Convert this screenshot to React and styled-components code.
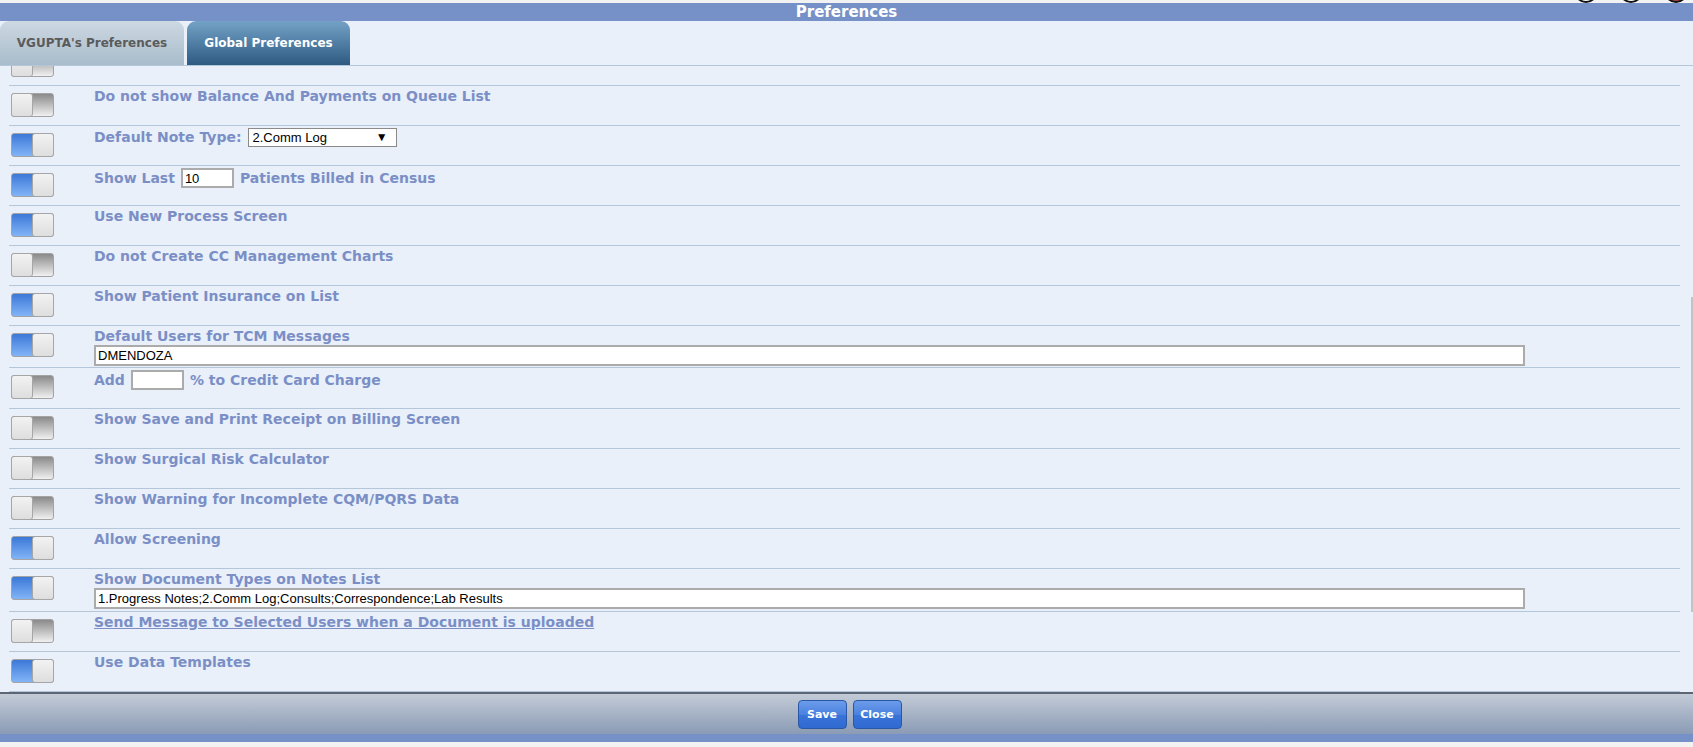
import styled, { createGlobalStyle } from "styled-components";

const GlobalStyle = createGlobalStyle`
  html, body {
    margin: 0;
    padding: 0;
    background: #f2f2f2;
    font-family: "DejaVu Sans", Verdana, sans-serif;
  }
  * { box-sizing: border-box; }
`;

const rows = [
  { id: "above", on: false, clipped: true },
  { id: "balance", on: false, label: "Do not show Balance And Payments on Queue List" },
  { id: "note", on: true, kind: "select", label: "Default Note Type:", value: "2.Comm Log" },
  { id: "census", on: true, kind: "inline", before: "Show Last", value: "10", after: "Patients Billed in Census" },
  { id: "process", on: true, label: "Use New Process Screen" },
  { id: "cc", on: false, label: "Do not Create CC Management Charts" },
  { id: "insurance", on: true, label: "Show Patient Insurance on List" },
  { id: "tcm", on: true, kind: "wide", label: "Default Users for TCM Messages", value: "DMENDOZA" },
  { id: "credit", on: false, kind: "inline", before: "Add", value: "", after: "% to Credit Card Charge", extra: 1 },
  { id: "receipt", on: false, label: "Show Save and Print Receipt on Billing Screen" },
  { id: "risk", on: false, label: "Show Surgical Risk Calculator" },
  { id: "cqm", on: false, label: "Show Warning for Incomplete CQM/PQRS Data" },
  { id: "screening", on: true, label: "Allow Screening" },
  { id: "doctypes", on: true, kind: "wide", label: "Show Document Types on Notes List", value: "1.Progress Notes;2.Comm Log;Consults;Correspondence;Lab Results", extra: 1 },
  { id: "message", on: false, link: true, label: "Send Message to Selected Users when a Document is uploaded" },
  { id: "templates", on: true, label: "Use Data Templates" },
];

export default function App() {
  return (
    <Page>
      <GlobalStyle />
      <TopStrip>
        <WinDot />
        <WinDot />
        <WinDot $red />
      </TopStrip>
      <TitleBar>Preferences</TitleBar>
      <TabBar>
        <Tab>VGUPTA's Preferences</Tab>
        <Tab $active>Global Preferences</Tab>
      </TabBar>
      <Content>
        <List>
          {rows.map((r) => (
            <Row key={r.id} $extra={r.extra || 0}>
              <Toggle $on={r.on}>
                <Knob />
              </Toggle>
              <Body>
                {r.kind === "select" && (
                  <Label>
                    {r.label}
                    <SelectBox>
                      <span>{r.value}</span>
                      <Arrow>▼</Arrow>
                    </SelectBox>
                  </Label>
                )}
                {r.kind === "inline" && (
                  <Label>
                    {r.before}
                    <SmallInput defaultValue={r.value} />
                    {r.after}
                  </Label>
                )}
                {r.kind === "wide" && (
                  <>
                    <Label>{r.label}</Label>
                    <WideInput defaultValue={r.value} />
                  </>
                )}
                {!r.kind && !r.clipped && <Label $link={r.link}>{r.label}</Label>}
              </Body>
            </Row>
          ))}
        </List>
        <ScrollThumb />
      </Content>
      <Footer>
        <Button>Save</Button>
        <Button>Close</Button>
      </Footer>
      <BottomBand />
      <BottomEdge />
    </Page>
  );
}

const Page = styled.div`
  width: 1693px;
  height: 747px;
  display: flex;
  flex-direction: column;
  overflow: hidden;
  background: #e9f0fa;
`;

const TopStrip = styled.div`
  height: 3px;
  background: #f2f2f2;
  display: flex;
  justify-content: flex-end;
  gap: 21px;
  padding-right: 5px;
  overflow: hidden;
`;

const WinDot = styled.div`
  width: 24px;
  height: 24px;
  margin-top: -21px;
  border-radius: 50%;
  border: 2px solid #111;
  background: ${({ $red }) => ($red ? "#b04040" : "#fff")};
`;

const TitleBar = styled.div`
  height: 18px;
  background: #7591c8;
  color: #fff;
  font-weight: bold;
  font-size: 15px;
  line-height: 18px;
  text-align: center;
`;

const TabBar = styled.div`
  height: 45px;
  display: flex;
  align-items: flex-end;
  gap: 3px;
  border-bottom: 1px solid #b4c7da;
  background: #e9f0fa;
`;

const Tab = styled.div`
  height: 44px;
  width: ${({ $active }) => ($active ? "163px" : "184px")};
  border-radius: 9px 9px 0 0;
  display: flex;
  align-items: center;
  justify-content: center;
  font-weight: bold;
  font-size: 12px;
  color: ${({ $active }) => ($active ? "#ffffff" : "#5b5b5b")};
  background: ${({ $active }) =>
    $active
      ? "linear-gradient(to bottom, #74a2c6, #2e5a82)"
      : "linear-gradient(to bottom, #cdd8e2, #a8bccb)"};
`;

const Content = styled.div`
  position: relative;
  height: 626px;
  overflow: hidden;
`;

const List = styled.div`
  margin-top: -20px;
  padding: 0 13px 0 9px;
`;

const Row = styled.div`
  display: flex;
  min-height: ${({ $extra }) => 40 + $extra}px;
  padding-bottom: ${({ $extra }) => $extra}px;
  border-bottom: 1px solid #b4c7da;
`;

const Toggle = styled.div`
  flex: none;
  width: 43px;
  height: 24px;
  margin: 7px 0 0 2px;
  border: 1px solid #a3a3a3;
  border-radius: 3px;
  display: flex;
  justify-content: ${({ $on }) => ($on ? "flex-end" : "flex-start")};
  background: ${({ $on }) =>
    $on
      ? "linear-gradient(to bottom, #3b78d8, #82b4f6)"
      : "linear-gradient(to bottom, #8a8a8a, #f0f0f0)"};
`;

const Knob = styled.div`
  width: 22px;
  height: 24px;
  margin: -1px;
  border: 1px solid #a6a6a6;
  border-radius: 3px;
  background: linear-gradient(to bottom, #f2f2f2, #dedede);
`;

const Body = styled.div`
  flex: 1;
  display: flex;
  flex-direction: column;
  padding: 2px 0 1px 40px;
`;

const Label = styled.div`
  display: flex;
  align-items: center;
  gap: 6px;
  min-height: 17px;
  line-height: 17px;
  font-size: 14px;
  font-weight: bold;
  color: #7b8fc6;
  text-decoration: ${({ $link }) => ($link ? "underline" : "none")};
  cursor: ${({ $link }) => ($link ? "pointer" : "default")};
`;

const SelectBox = styled.div`
  display: flex;
  align-items: center;
  justify-content: space-between;
  width: 149px;
  height: 19px;
  padding: 0 8px 0 4px;
  background: #fff;
  border: 1px solid #8a8a8a;
  font-family: "Liberation Sans", Arial, sans-serif;
  font-weight: normal;
  font-size: 13px;
  color: #000;
`;

const Arrow = styled.span`
  font-size: 12px;
`;

const SmallInput = styled.input`
  width: 53px;
  height: 20px;
  padding: 0 2px;
  border: 2px solid #ababab;
  background: #fff;
  font-family: "Liberation Sans", Arial, sans-serif;
  font-size: 13px;
  color: #000;
  outline: none;
`;

const WideInput = styled.input`
  width: 1431px;
  height: 21px;
  padding: 0 2px;
  border: 2px solid #ababab;
  background: #fff;
  font-family: "Liberation Sans", Arial, sans-serif;
  font-size: 13px;
  color: #000;
  outline: none;
`;

const ScrollThumb = styled.div`
  position: absolute;
  right: 0;
  top: 231px;
  width: 2px;
  height: 315px;
  background: #c3c3c3;
`;

const Footer = styled.div`
  height: 42px;
  border-top: 2px solid #5c6674;
  background: linear-gradient(to bottom, #c3cbd7, #8a9bb5);
  display: flex;
  align-items: center;
  justify-content: center;
  gap: 6px;
  padding-left: 6px;
`;

const Button = styled.button`
  width: 49px;
  height: 29px;
  padding: 0;
  border: 1px solid #2a58a6;
  border-radius: 4px;
  background: linear-gradient(to bottom, #6c9bea 0%, #4a82e0 50%, #3a74d8 51%, #2f6ad2 100%);
  color: #fff;
  font-family: "DejaVu Sans", Verdana, sans-serif;
  font-weight: bold;
  font-size: 11px;
  cursor: pointer;
`;

const BottomBand = styled.div`
  height: 8px;
  background: #7591c8;
`;

const BottomEdge = styled.div`
  flex: 1;
  background: #f2f2f2;
`;
